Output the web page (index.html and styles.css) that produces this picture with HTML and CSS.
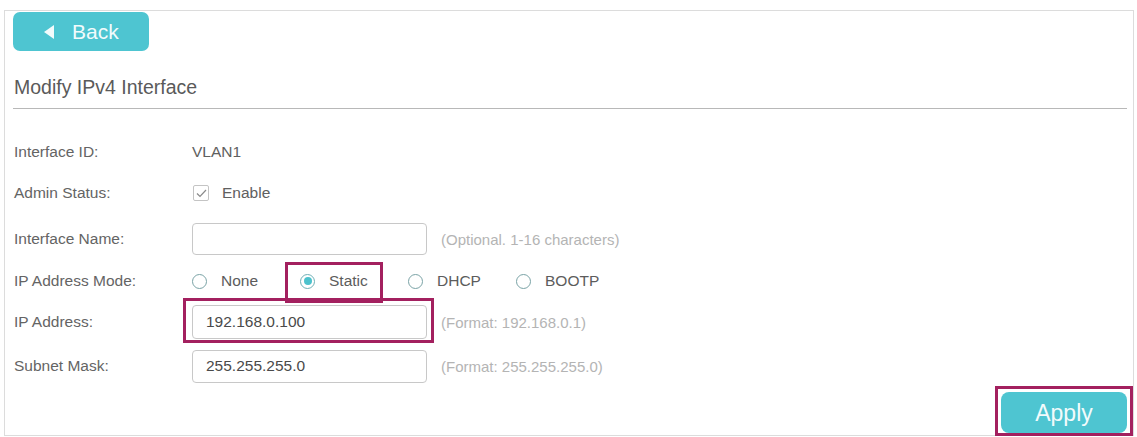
FILE: index.html
```html
<!DOCTYPE html>
<html lang="en">
<head>
<meta charset="utf-8">
<title>Modify IPv4 Interface</title>
<link rel="stylesheet" href="styles.css">
</head>
<body>
<div class="panel">
  <button class="btn back" type="button">
    <svg class="tri" width="10" height="14" viewBox="0 0 10 14"><polygon points="10,0 10,14 0,7" fill="#f2fbfc"/></svg>
    <span>Back</span>
  </button>
  <h1 class="title">Modify IPv4 Interface</h1>
  <div class="form">
    <div class="row r1">
      <div class="label">Interface ID:</div>
      <div class="value">VLAN1</div>
    </div>
    <div class="row r2">
      <div class="label">Admin Status:</div>
      <label class="check">
        <span class="box"><svg width="11" height="9" viewBox="0 0 11 9"><polyline points="1,4.5 4,7.5 10,1" fill="none" stroke="#8a8a8a" stroke-width="1.2"/></svg></span>
        <span>Enable</span>
      </label>
    </div>
    <div class="row r3">
      <div class="label">Interface Name:</div>
      <input class="field f32" type="text" value="">
      <span class="hint">(Optional. 1-16 characters)</span>
    </div>
    <div class="row r4">
      <div class="label">IP Address Mode:</div>
      <div class="radios">
        <span class="radio"><span class="dot"></span><span>None</span></span>
        <span class="radio hl-static"><span class="dot on"></span><span>Static</span></span>
        <span class="radio"><span class="dot"></span><span>DHCP</span></span>
        <span class="radio"><span class="dot"></span><span>BOOTP</span></span>
      </div>
    </div>
    <div class="row r5">
      <div class="label">IP Address:</div>
      <span class="hl-ip"><input class="field f34" type="text" value="192.168.0.100"></span>
      <span class="hint">(Format: 192.168.0.1)</span>
    </div>
    <div class="row r6">
      <div class="label">Subnet Mask:</div>
      <input class="field f33" type="text" value="255.255.255.0">
      <span class="hint">(Format: 255.255.255.0)</span>
    </div>
  </div>
  <div class="footer">
    <span class="hl-apply"><button class="btn apply" type="button">Apply</button></span>
  </div>
</div>
</body>
</html>
```
FILE: styles.css
```css
* { box-sizing: border-box; }
html, body { margin: 0; padding: 0; background: #fff; }
body {
  font-family: "Liberation Sans", Arial, sans-serif;
  color: #5a5a5a;
  width: 1137px;
  height: 437px;
  overflow: hidden;
}
.panel {
  margin: 10px 0 0 4px;
  width: 1130px;
  border: 1px solid #dcdcdc;
  padding: 1px 6px 2px 8px;
}
.btn {
  border: none;
  background: #4ec5d1;
  color: #f2fbfc;
  font-family: "Liberation Sans", Arial, sans-serif;
  cursor: pointer;
}
.back {
  display: flex;
  align-items: center;
  width: 136px;
  height: 39px;
  border-radius: 7px;
  padding: 0 0 0 31px;
  font-size: 21px;
  gap: 18px;
}
.tri { display: block; }
.title {
  margin: 24px 0 9px 1px;
  font-size: 19.5px;
  line-height: 24px;
  font-weight: normal;
  color: #5a5a5a;
}
.form {
  border-top: 1px solid #b8b8b8;
  padding-top: 23px;
}
.row {
  display: flex;
  align-items: center;
  font-size: 15.5px;
}
.r1 { height: 40px; }
.r2 { height: 42px; }
.r3 { height: 50px; }
.r4 { height: 34px; }
.r5 { height: 48px; }
.r6 { height: 40px; }
.label {
  width: 179px;
  flex: none;
  color: #646464;
  padding-left: 1px;
}
.value { color: #606060; }
.check {
  display: flex;
  align-items: center;
  gap: 13px;
  padding-left: 1px;
  color: #606060;
}
.box {
  width: 16px;
  height: 16px;
  border: 1px solid #c4c4c4;
  border-radius: 2px;
  display: flex;
  align-items: center;
  justify-content: center;
}
.field {
  width: 235px;
  border: 1px solid #c8c8c8;
  border-radius: 4px;
  background: #fff;
  padding: 0 0 0 13px;
  font-family: "Liberation Sans", Arial, sans-serif;
  font-size: 15.5px;
  color: #4a4a4a;
  outline: none;
}
.f32 { height: 32px; }
.f34 { height: 34px; }
.f33 { height: 33px; }
.hint {
  margin-left: 14px;
  font-size: 15px;
  color: #b4b4b4;
}
.radios { display: flex; align-items: center; }
.radio {
  display: inline-flex;
  align-items: center;
  width: 108px;
  gap: 14px;
  color: #5c5c5c;
  position: relative;
  height: 20px;
}
.dot {
  width: 15px;
  height: 15px;
  border: 1.5px solid #7aa3a6;
  border-radius: 50%;
  display: inline-flex;
  align-items: center;
  justify-content: center;
  flex: none;
}
.dot.on { border-color: #6fb0b6; }
.dot.on::after {
  content: "";
  width: 8px;
  height: 8px;
  border-radius: 50%;
  background: #4cc2cd;
}
.hl-static::after {
  content: "";
  position: absolute;
  left: -15px;
  top: -9px;
  width: 92px;
  height: 35px;
  border: 3px solid #a3205f;
}
.hl-ip {
  position: relative;
  display: inline-block;
  line-height: 0;
}
.hl-ip::after {
  content: "";
  position: absolute;
  left: -9px;
  top: -7px;
  right: -7px;
  bottom: -4px;
  border: 3px solid #a3205f;
  pointer-events: none;
}
.footer {
  display: flex;
  justify-content: flex-end;
  margin-top: 6px;
}
.hl-apply {
  position: relative;
  display: inline-block;
  line-height: 0;
}
.hl-apply::after {
  content: "";
  position: absolute;
  left: -6px;
  top: -6px;
  right: -6px;
  bottom: -3px;
  border: 3px solid #a3205f;
  pointer-events: none;
}
.apply {
  width: 126px;
  height: 41px;
  border-radius: 8px;
  font-size: 23px;
  line-height: 41px;
}
```
